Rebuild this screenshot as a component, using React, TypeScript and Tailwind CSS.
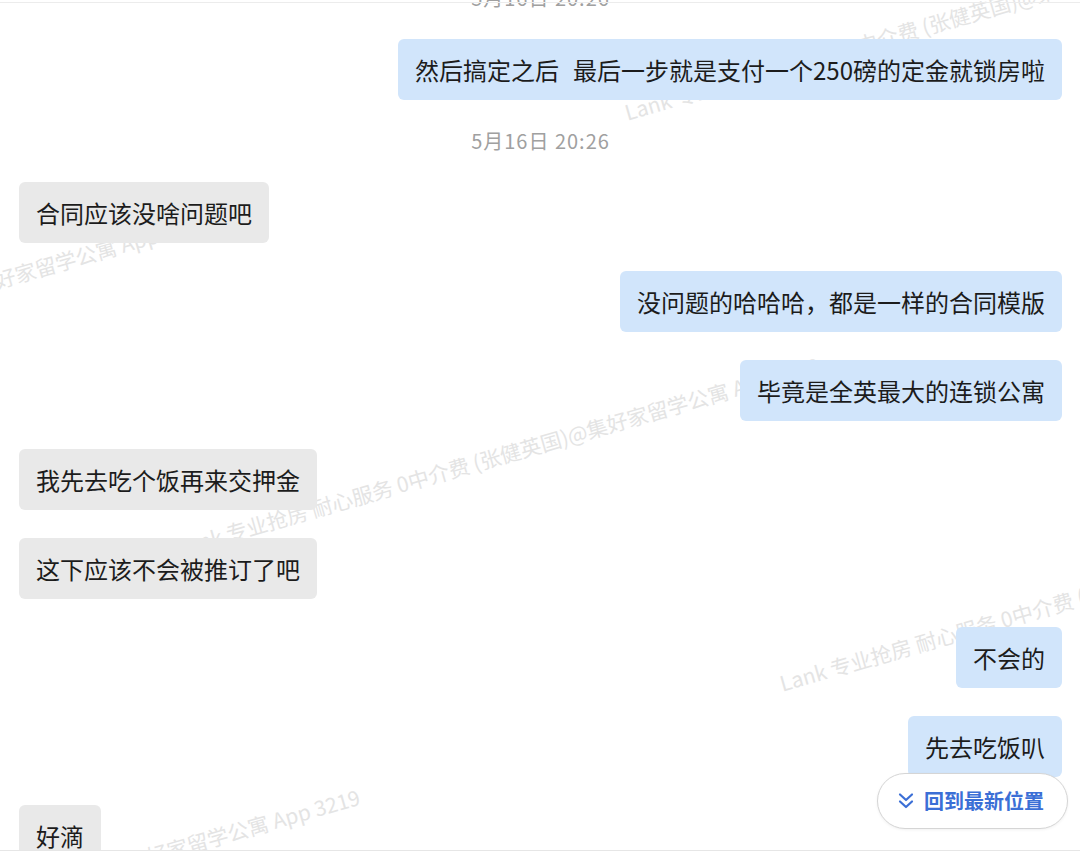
import React from "react";

type Msg =
  | { kind: "time"; text: string }
  | { kind: "l" | "r"; text: string };

const messages: Msg[] = [
  { kind: "time", text: "5月16日 20:26" },
  { kind: "r", text: "然后搞定之后 最后一步就是支付一个250磅的定金就锁房啦" },
  { kind: "time", text: "5月16日 20:26" },
  { kind: "l", text: "合同应该没啥问题吧" },
  { kind: "r", text: "没问题的哈哈哈，都是一样的合同模版" },
  { kind: "r", text: "毕竟是全英最大的连锁公寓" },
  { kind: "l", text: "我先去吃个饭再来交押金" },
  { kind: "l", text: "这下应该不会被推订了吧" },
  { kind: "r", text: "不会的" },
  { kind: "r", text: "先去吃饭叭" },
  { kind: "l", text: "好滴" },
];

const WM = "Lank 专业抢房 耐心服务 0中介费 (张健英国)@集好家留学公寓 App 3219";

const marks = [
  { left: 625, top: 112 },
  { left: -436, top: 404 },
  { left: 176, top: 548 },
  { left: 780, top: 683 },
  { left: -284, top: 980 },
];

function Watermarks() {
  return (
    <div className="pointer-events-none absolute inset-0 z-0 overflow-hidden">
      {marks.map((m, i) => (
        <div
          key={i}
          className="absolute whitespace-nowrap text-[21px] leading-[24px] text-[#e4e4e4] origin-[0_50%] -rotate-[16deg]"
          style={{ left: m.left, top: m.top - 12 }}
        >
          {WM}
        </div>
      ))}
    </div>
  );
}

function Bubble({ side, text }: { side: "l" | "r"; text: string }) {
  const parts = text.split(" ");
  return (
    <div className={`flex ${side === "r" ? "justify-end" : "justify-start"}`}>
      <div
        className={`relative z-10 h-[61px] flex items-center whitespace-nowrap rounded-[6px] px-[17px] text-[24px] leading-[33px] text-[#1c1c1c] ${
          side === "r" ? "bg-[#d1e5fb]" : "bg-[#e9e9e9]"
        }`}
      >
        {parts.map((p, i) => (
          <React.Fragment key={i}>
            {i > 0 && <span className="inline-block w-[14px]"> </span>}
            {p}
          </React.Fragment>
        ))}
      </div>
    </div>
  );
}

export default function App() {
  return (
    <div className="relative h-[855px] w-[1080px] overflow-hidden bg-white font-['Noto_Sans_CJK_SC','Noto_Sans',sans-serif]">
      <div className="relative h-[851px] overflow-hidden border-b border-[#e6e6e6]">
        <Watermarks />
        <div className="relative z-10 mt-[-15px] flex flex-col gap-[28px] pl-[19px] pr-[18px]">
          {messages.map((m, i) =>
            m.kind === "time" ? (
              <div
                key={i}
                className="h-[26px] text-center text-[20px] leading-[26px] tracking-[1px] text-[#a0a0a0]"
              >
                {m.text}
              </div>
            ) : (
              <Bubble key={i} side={m.kind} text={m.text} />
            )
          )}
        </div>
        <div className="absolute left-0 right-0 top-[2px] z-20 h-px bg-[#ececec]" />
        <button className="absolute left-[877px] top-[773px] z-30 flex h-[56px] w-[191px] items-center gap-[9px] rounded-full border border-[#d5d5d5] bg-white pl-[19px] shadow-[0_1px_3px_rgba(0,0,0,0.06)]">
          <svg width="18" height="20" viewBox="0 0 18 20" fill="none" stroke="#3b6fd6" strokeWidth="2.2" strokeLinecap="round" strokeLinejoin="round">
            <path d="M3 3.5 L9 9 L15 3.5" />
            <path d="M3 10.5 L9 16 L15 10.5" />
          </svg>
          <span className="text-[20px] font-bold leading-[24px] text-[#3b6fd6]">回到最新位置</span>
        </button>
      </div>
    </div>
  );
}
